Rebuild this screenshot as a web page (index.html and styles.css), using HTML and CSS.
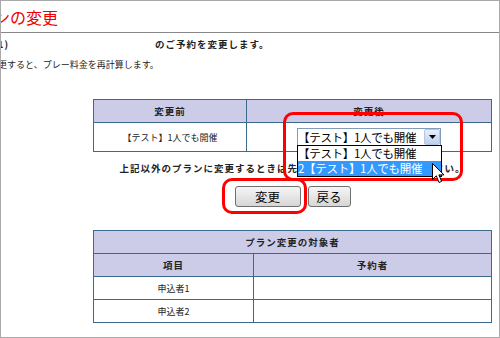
FILE: index.html
```html
<!DOCTYPE html>
<html lang="ja">
<head>
  <meta charset="UTF-8">
  <meta name="viewport" content="width=device-width, initial-scale=1.0">
  <title>プランの変更</title>
  <link rel="stylesheet" href="styles.css">
</head>
<body>

  <div class="frame">
    <div class="page">
      <h1 class="title">プランの変更</h1>
      <p class="lead"><span class="lead-who">テスト予約 (ID:1)</span><span class="lead-text">のご予約を変更します。</span></p>
      <p class="note">プランを変更すると、プレー料金を再計算します。</p>

      <table class="grid grid-plan">
        <tr>
          <th class="col-first">変更前</th>
          <th>変更後</th>
        </tr>
        <tr class="row-tall">
          <td>【テスト】1人でも開催</td>
          <td>
            <div class="combo">
              <span class="combo-value">【テスト】1人でも開催</span>
              <span class="combo-btn">
                <svg width="7" height="4" viewBox="0 0 7 4"><path d="M0 0h7L3.5 4z" fill="#000"/></svg>
              </span>
              <ul class="combo-list">
                <li>【テスト】1人でも開催</li>
                <li class="is-hover">2【テスト】1人でも開催</li>
              </ul>
            </div>
          </td>
        </tr>
      </table>

      <p class="warn">上記以外のプランに変更するときは先に予約をキャンセルしてください。</p>

      <div class="actions">
        <button class="btn btn-main">変更</button>
        <button class="btn">戻る</button>
      </div>

      <table class="grid grid-members">
        <tr>
          <th colspan="2">プラン変更の対象者</th>
        </tr>
        <tr>
          <th class="col-first">項目</th>
          <th>予約者</th>
        </tr>
        <tr>
          <td>申込者1</td>
          <td></td>
        </tr>
        <tr>
          <td>申込者2</td>
          <td></td>
        </tr>
      </table>
    </div>

    <!-- annotations drawn over the screenshot -->
    <div class="mark mark-combo"></div>
    <div class="mark mark-submit"></div>
    <svg class="cursor" width="13" height="21" viewBox="0 0 13 21">
      <path d="M0.5 0.5L0.5 16.5L4.3 12.8L7 19.5L9.6 18.4L6.9 11.9L12 11.9Z" fill="#fff" stroke="#000" stroke-width="1"/>
    </svg>
  </div>

</body>
</html>
```

FILE: styles.css
```css
body {
  margin: 0;
  font-family: "Noto Sans CJK JP", sans-serif;
  color: #222;
  background: #fff;
}
.frame {
  position: relative;
  width: 500px;
  height: 338px;
  box-sizing: border-box;
  border: 1px solid #aaa;
  overflow: hidden;
  background: #fff;
}
.page {
  margin-left: -41px;
  width: 665px;
}
.title {
  margin: 0;
  height: 31px;
  line-height: 32px;
  padding-left: 2px;
  font-size: 16px;
  font-weight: normal;
  color: #e00;
  border-bottom: 1px solid #888;
}
.lead {
  display: flex;
  margin: 4px 0 0;
  font-size: 9.5px;
  font-weight: bold;
  letter-spacing: 1px;
  line-height: 14px;
}
.lead-who {
  display: flex;
  justify-content: flex-end;
  width: 49px;
  white-space: nowrap;
}
.lead-text {
  margin-left: 146px;
}
.note {
  margin: 7px 0 0;
  font-size: 9px;
  line-height: 14px;
  text-indent: -7px;
}
.grid {
  border-collapse: collapse;
  width: 399px;
  margin: 27px auto 0;
  font-size: 9px;
}
.grid th, .grid td {
  border: 1px solid #3c6a8c;
  padding: 0;
  height: 22px;
  text-align: center;
}
.grid th {
  background: #cccce8;
  font-size: 9.5px;
  font-weight: bold;
  letter-spacing: 1px;
}
.grid-plan .col-first {
  width: 152px;
}
.grid-members .col-first {
  width: 159px;
}
.row-tall td {
  height: 28px;
}
.combo {
  position: relative;
  display: flex;
  width: 144px;
  height: 18px;
  margin: 0 auto;
  box-sizing: border-box;
  border: 1px solid #7f9db9;
  text-align: left;
  background: #fff;
}
.combo-value {
  flex: 1;
  font-size: 11.5px;
  letter-spacing: -0.3px;
  line-height: 16px;
  color: #000;
  white-space: nowrap;
}
.combo-btn {
  display: flex;
  align-items: center;
  justify-content: center;
  width: 16px;
  box-sizing: border-box;
  border: 1px solid #b6c7e2;
  border-radius: 2px;
  background: linear-gradient(#e6eefb, #bccfee);
}
.combo-list {
  position: absolute;
  left: -1px;
  top: 16px;
  z-index: 2;
  width: 145px;
  box-sizing: border-box;
  margin: 0;
  padding: 0;
  list-style: none;
  border: 1px solid #000;
  background: #fff;
}
.combo-list li {
  height: 15px;
  line-height: 15px;
  font-size: 11.5px;
  letter-spacing: -0.3px;
  color: #000;
  white-space: nowrap;
}
.combo-list .is-hover {
  background: #3399ff;
  color: #fff;
}
.warn {
  margin: 9px 0 0;
  text-align: center;
  font-size: 9.5px;
  font-weight: bold;
  letter-spacing: 1px;
  line-height: 14px;
}
.actions {
  display: flex;
  justify-content: center;
  gap: 7px;
  margin-top: 11px;
}
.btn {
  width: 43px;
  height: 21px;
  padding: 0;
  border: 1px solid #707070;
  border-radius: 3px;
  background: linear-gradient(#f6f6f6, #d6d6d6);
  font-family: inherit;
  font-size: 12.5px;
  line-height: 19px;
  color: #000;
}
.btn-main {
  width: 66px;
}
.grid-members {
  margin-top: 23px;
}
.mark {
  position: absolute;
  box-sizing: border-box;
  border: 3px solid #f00;
  border-radius: 10px;
  z-index: 3;
}
.mark-combo {
  left: 282px;
  top: 111px;
  width: 180px;
  height: 69px;
}
.mark-submit {
  left: 221px;
  top: 177px;
  width: 85px;
  height: 36px;
}
.cursor {
  position: absolute;
  left: 431px;
  top: 162px;
  z-index: 4;
}
```
